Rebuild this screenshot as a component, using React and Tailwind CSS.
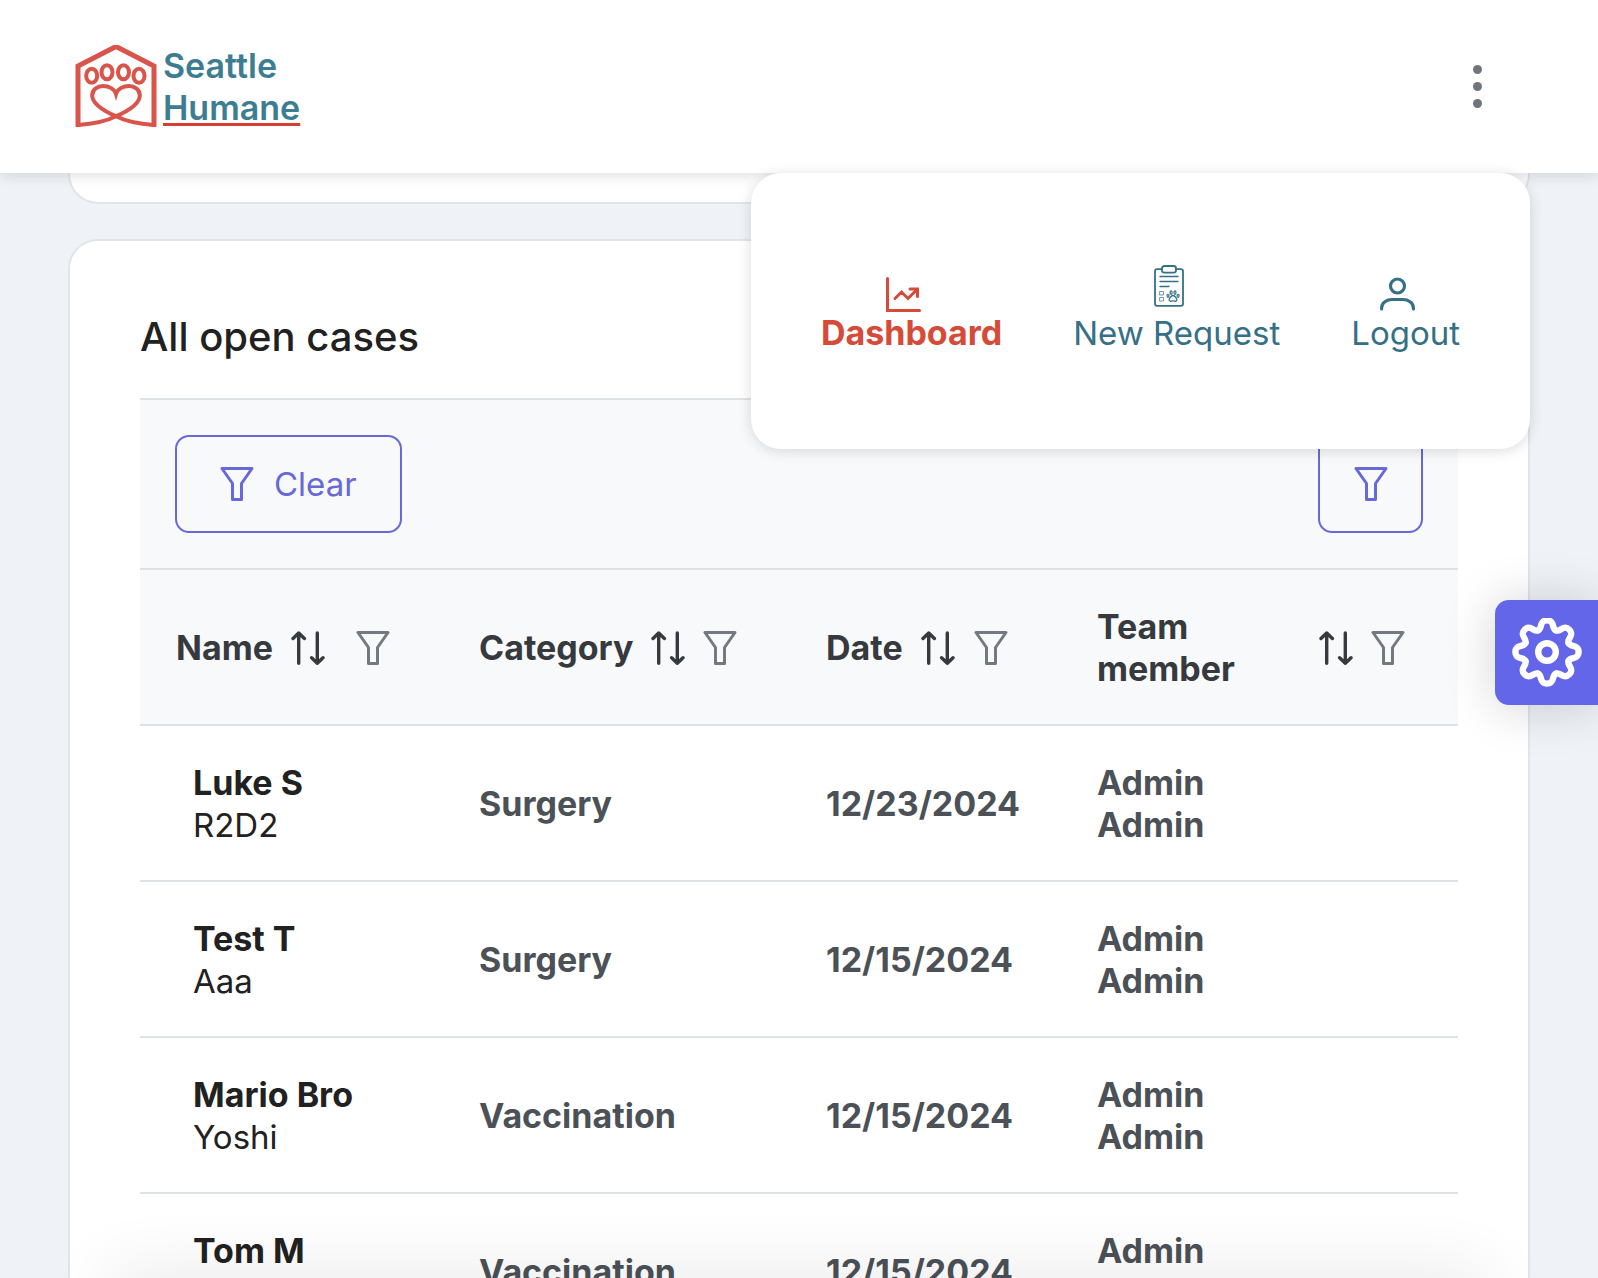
import { useState } from "react";

const cases = [
  { owner: "Luke S", pet: "R2D2", category: "Surgery", date: "12/23/2024" },
  { owner: "Test T", pet: "Aaa", category: "Surgery", date: "12/15/2024" },
  { owner: "Mario Bro", pet: "Yoshi", category: "Vaccination", date: "12/15/2024" },
  { owner: "Tom M", pet: "", category: "Vaccination", date: "12/15/2024" },
];

const teeth = [0, 45, 90, 135, 180, 225, 270, 315];

function Logo() {
  return (
    <svg viewBox="0 0 84 82" className="h-[82px] w-[84px]" fill="none" stroke="#d9544a" strokeWidth="4">
      <path d="M4 82V21L42 1.5L80 21V82" strokeWidth="5" />
      <ellipse cx="17.7" cy="30.7" rx="5.5" ry="7" />
      <ellipse cx="33" cy="27.3" rx="5.5" ry="7" />
      <ellipse cx="49.5" cy="27.3" rx="5.5" ry="7" />
      <ellipse cx="65" cy="30.7" rx="5.5" ry="7" />
      <path d="M4 80C18 79 33 76 42 71.3C54 66 65.8 59 65.8 50.5C65.8 44 60 41 55 41C49 41 43.5 44 42 49C40.5 44 35 41 29 41C24 41 18.2 44 18.2 50.5C18.2 59 30 66 42 71.3C51 76 66 79 80 80" />
    </svg>
  );
}

function GearIcon() {
  return (
    <svg viewBox="-35 -34 70 70" className="h-[70px] w-[70px]" fill="none" stroke="currentColor" strokeWidth="6.4" strokeLinecap="round">
      {teeth.map((deg) => (
        <path
          key={deg}
          transform={`rotate(${deg})`}
          d="M-8.9 -21.6C-4.4 -23.4 -8.2 -31.6 0 -31.6C8.2 -31.6 4.4 -23.4 8.9 -21.6"
        />
      ))}
      <circle cx="0" cy="0" r="8.8" />
    </svg>
  );
}

function FilterIcon() {
  return (
    <svg viewBox="0 0 34 34" className="h-[34px] w-[34px] shrink-0" fill="none" stroke="currentColor" strokeWidth="3" strokeLinejoin="round">
      <path d="M2 1.5H32L21.5 16.5V32.5H12.5V16.5Z" />
    </svg>
  );
}

function SortIcon() {
  return (
    <svg viewBox="0 0 34 34" className="h-[34px] w-[34px] shrink-0" fill="none" stroke="currentColor" strokeWidth="3.4" strokeLinecap="round" strokeLinejoin="round">
      <path d="M7.7 32.3V2M2 7.5L7.7 2L13.4 7.5" />
      <path d="M26.3 2V32.3M20.6 26.8L26.3 32.3L32 26.8" />
    </svg>
  );
}

function ChartIcon() {
  return (
    <svg viewBox="0 0 35 35" className="h-[35px] w-[35px]" fill="none" stroke="currentColor" strokeWidth="3" strokeLinecap="round">
      <path d="M1.5 1.5V33.5H33.5" />
      <path d="M9 21.5L15.5 15L22 21.5L31 12.5M24 12H31.5V19.5" />
    </svg>
  );
}

function ClipboardIcon() {
  return (
    <svg viewBox="0 0 30 42" className="mb-[5px] h-[42px] w-[30px]" fill="none" stroke="currentColor" strokeWidth="1.8" strokeLinecap="round">
      <path d="M8 4.2H3Q1 4.2 1 6.2V38.8Q1 40.8 3 40.8H27Q29 40.8 29 38.8V6.2Q29 4.2 27 4.2H22" />
      <rect x="8" y="1" width="14" height="6.6" rx="2.4" />
      <path d="M6 11.5H24M6 16.5H24M6 21.5H15" strokeWidth="1.3" />
      <path d="M6 26.5H9.5V30H6ZM6 32.5H9.5V36H6Z" strokeWidth="0.7" />
      <path d="M19 30.5C17 30.5 16.5 32.5 15.5 33.5C14.5 35 15.5 36.5 17 36.2C18.5 35.6 19.5 35.6 21 36.2C22.5 36.5 23.5 35 22.5 33.5C21.5 32.5 21 30.5 19 30.5Z" strokeWidth="1.3" />
      <ellipse cx="14" cy="30.8" rx="1" ry="1.5" strokeWidth="1.2" />
      <ellipse cx="17.1" cy="27.6" rx="1" ry="1.7" strokeWidth="1.2" />
      <ellipse cx="21" cy="27.6" rx="1" ry="1.7" strokeWidth="1.2" />
      <ellipse cx="24.1" cy="30.8" rx="1" ry="1.5" strokeWidth="1.2" />
    </svg>
  );
}

function UserIcon() {
  return (
    <svg viewBox="0 0 35 35" className="h-[35px] w-[35px]" fill="none" stroke="currentColor" strokeWidth="3.2" strokeLinecap="round">
      <circle cx="17.5" cy="9" r="7" />
      <path d="M1.6 32V31C1.6 25.5 7 22.5 12 22.5H23C28 22.5 33.4 25.5 33.4 31V32" />
    </svg>
  );
}

function NavItem({ icon, label, active }) {
  return (
    <li>
      <a
        href="#"
        className={`flex flex-col items-center ${active ? "text-[34px] font-bold text-[#d64b38]" : "text-[33px] text-[#357086]"}`}
      >
        <span className="mr-4">{icon}</span>
        <span className="leading-[42px]">{label}</span>
      </a>
    </li>
  );
}

function HeaderCell({ title, grow }) {
  return (
    <th scope="col" className="pt-9 pr-9 pb-[34px] pl-9 text-left font-bold">
      <div className="flex h-[84px] items-center justify-between pr-[17px]">
        <button className={`flex items-center justify-between gap-[18px] text-left ${grow ? "grow" : ""}`}>
          {grow ? <span className="w-min">{title}</span> : title}
          <SortIcon />
        </button>
        <button aria-label={`Filter ${title}`} className={`text-[#747980] ${grow ? "ml-[18px]" : ""}`}>
          <FilterIcon />
        </button>
      </div>
    </th>
  );
}

function App() {
  const [menuOpen, setMenuOpen] = useState(true);

  return (
    <div className="relative h-screen overflow-hidden bg-[#eff3f8] font-['Inter','Liberation_Sans',sans-serif] text-[34px] leading-[42px] text-[#212121]">
      <header className="relative z-20 flex h-[173px] items-center justify-between bg-white px-[70px] shadow-[0_2px_14px_rgba(0,0,0,0.14)]">
        <a href="#" className="flex items-start gap-[5px] pl-1 font-semibold text-[#3d7d92]">
          <Logo />
          <span className="flex flex-col">
            <span>Seattle</span>
            <span className="underline decoration-[#d63f31] decoration-3 underline-offset-3">Humane</span>
          </span>
        </a>
        <button
          aria-label="Toggle menu"
          onClick={() => setMenuOpen(!menuOpen)}
          className="flex w-[102px] flex-col items-center gap-[8px]"
        >
          <span className="h-[9px] w-[9px] rounded-full bg-[#70757d]"></span>
          <span className="h-[9px] w-[9px] rounded-full bg-[#70757d]"></span>
          <span className="h-[9px] w-[9px] rounded-full bg-[#70757d]"></span>
        </button>

        {menuOpen && (
          <nav className="absolute top-full right-[68px] rounded-[30px] bg-white px-[70px] pt-[92px] pb-[95px] shadow-[0_2px_14px_rgba(0,0,0,0.14)]">
            <ul className="flex items-end gap-[71px]">
              <NavItem icon={<ChartIcon />} label="Dashboard" active />
              <NavItem icon={<ClipboardIcon />} label="New Request" />
              <NavItem icon={<UserIcon />} label="Logout" />
            </ul>
          </nav>
        )}
      </header>

      <main className="flex flex-col gap-[35px] px-[68px]">
        <div className="h-[31px] rounded-b-[30px] border-2 border-t-0 border-[#e0e5ea] bg-white"></div>

        <section className="rounded-[30px] border-2 border-[#e0e5ea] bg-white p-[70px]">
          <h5 className="mb-[35px] text-[40px] leading-[52px] font-medium">All open cases</h5>

          <div className="flex items-center justify-between border-y-2 border-[#dfe2e5] bg-[#f8f9fb] p-[35px]">
            <button className="flex h-[98px] items-center gap-[20px] rounded-[14px] border-2 border-[#6769d6] px-[43px] text-[33px] text-[#6769d6]">
              <FilterIcon />
              Clear
            </button>
            <button
              aria-label="Filter cases"
              className="flex h-[98px] w-[105px] items-center justify-center rounded-[14px] border-2 border-[#6769d6] text-[#6769d6]"
            >
              <FilterIcon />
            </button>
          </div>

          <table className="w-full table-fixed">
            <colgroup>
              <col className="w-[303px]" />
              <col className="w-[347px]" />
              <col className="w-[271px]" />
              <col />
            </colgroup>
            <thead>
              <tr className="border-b-2 border-[#dfe2e5] bg-[#f8f9fb] text-[#363a3e]">
                <HeaderCell title="Name" />
                <HeaderCell title="Category" />
                <HeaderCell title="Date" />
                <HeaderCell title="Team member" grow />
              </tr>
            </thead>
            <tbody>
              {cases.map((item) => (
                <tr key={item.owner} className="border-b-2 border-[#dfe2e5] font-bold text-[#4b5157]">
                  <td className="pt-9 pb-[34px] pl-[53px] text-[#212121]">
                    <p>{item.owner}</p>
                    <p className="h-[42px] text-[33px] leading-[42px] font-normal">{item.pet}</p>
                  </td>
                  <td className="pt-9 pb-[34px] pl-9">{item.category}</td>
                  <td className="pt-9 pb-[34px] pl-9">{item.date}</td>
                  <td className="pt-9 pb-[34px] pl-9">
                    <p>Admin</p>
                    <p>Admin</p>
                  </td>
                </tr>
              ))}
            </tbody>
          </table>
        </section>
      </main>

      <button
        aria-label="Settings"
        className="absolute top-[600px] right-0 z-10 flex h-[105px] w-[103px] items-center justify-center rounded-l-[14px] bg-[#6366e8] text-white shadow-[0_2px_50px_rgba(0,0,0,0.18)]"
      >
        <GearIcon />
      </button>

      {/* soft shade along the bottom edge */}
      <div className="absolute inset-x-[110px] top-full h-10 shadow-[0_0_70px_rgba(0,0,0,0.12)]"></div>
    </div>
  );
}

export default App;
